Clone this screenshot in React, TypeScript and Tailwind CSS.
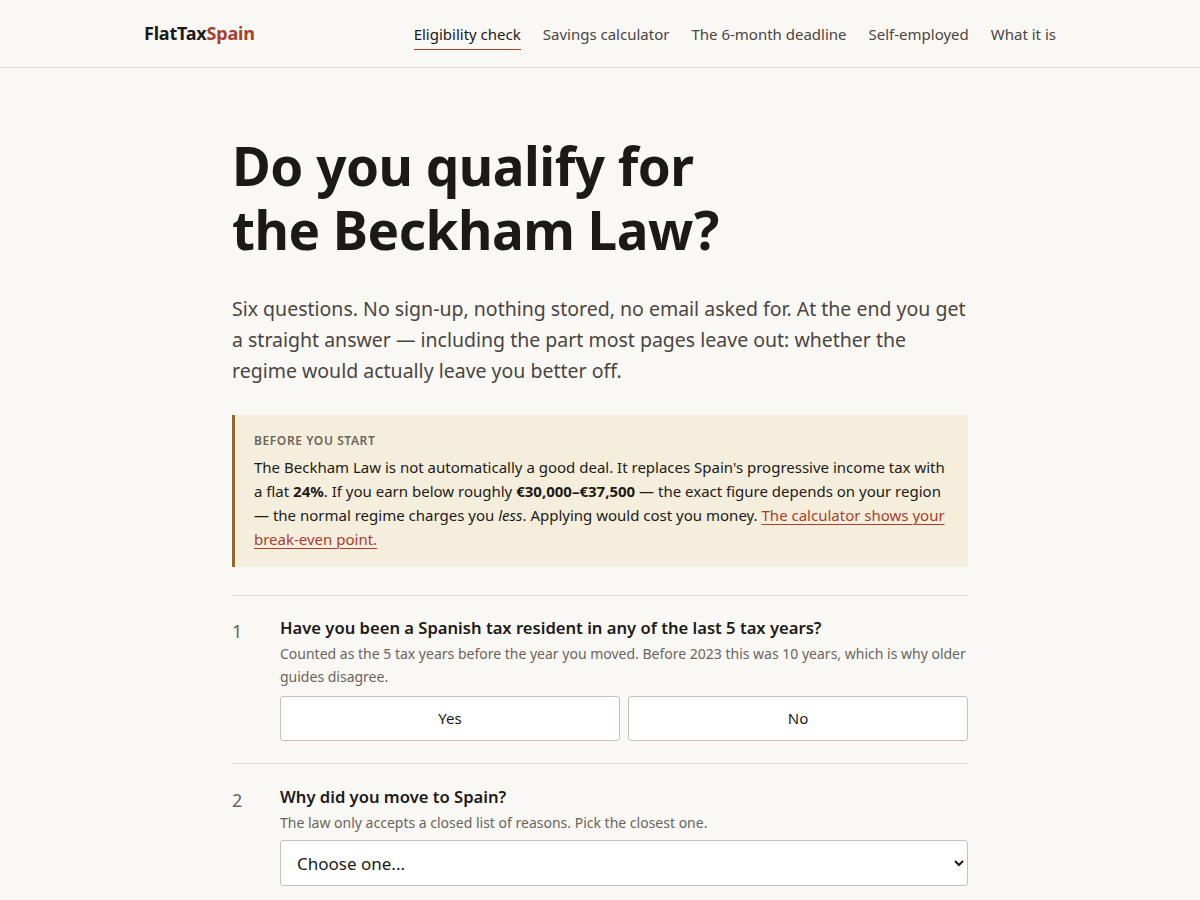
const nav = [
  { label: 'Eligibility check', active: true },
  { label: 'Savings calculator' },
  { label: 'The 6-month deadline' },
  { label: 'Self-employed' },
  { label: 'What it is' },
];

export default function App() {
  return (
    <div className="min-h-screen bg-[#faf8f5] text-[#1c1a17] font-['Noto_Sans',sans-serif]">
      {/* Header */}
      <header className="border-b border-[#e4ddd2]">
        <div className="max-w-[912px] mx-auto h-[67px] flex items-center justify-between">
          <a className="text-[18px] font-bold tracking-[-0.2px]">
            FlatTax<span className="text-[#a6402c]">Spain</span>
          </a>
          <nav className="flex items-center gap-[22px] text-[15px] text-[#4a453f] pt-[6px]">
            {nav.map((item) => (
              <a
                key={item.label}
                className={
                  item.active
                    ? 'text-[#1c1a17] pb-[4px] border-b border-[#a6402c]'
                    : 'pb-[4px] border-b border-transparent'
                }
              >
                {item.label}
              </a>
            ))}
          </nav>
        </div>
      </header>

      <main className="max-w-[736px] mx-auto pt-[66px] pb-16">
        <h1 className="text-[53px] leading-[64px] font-bold tracking-[-0.5px] text-[#1c1a17]">
          Do you qualify for
          <br />
          the Beckham Law?
        </h1>
        <p className="mt-[31px] text-[19.5px] leading-[31px] text-[#4a453f]">
          Six questions. No sign-up, nothing stored, no email asked for. At the end you get a straight
          answer — including the part most pages leave out: whether the regime would actually leave
          you better off.
        </p>

        {/* Callout */}
        <div className="mt-[29px] bg-[#f6eedc] border-l-[3px] border-[#8b6a2b] px-[19px] pt-[17px] pb-[16px]">
          <p className="text-[12px] font-semibold tracking-[0.6px] uppercase text-[#6b645a] leading-[18px]">
            Before you start
          </p>
          <p className="mt-[5px] text-[15px] leading-[24px] text-[#1c1a17] font-stretch-semi-condensed">
            The Beckham Law is not automatically a good deal. It replaces Spain's progressive income
            tax with a flat <strong className="font-bold">24%</strong>. If you earn below roughly{' '}
            <strong className="font-bold">€30,000–€37,500</strong> — the exact figure depends on your
            region — the normal regime charges you <em>less</em>. Applying would cost you money.{' '}
            <a className="text-[#a6402c] underline underline-offset-[3px] decoration-1">
              The calculator shows your break-even point.
            </a>
          </p>
        </div>

        {/* Questions */}
        <div className="mt-[28px] border-t border-[#e4ddd2]">
          <section className="flex pt-[19px] pb-[22px] border-b border-[#e4ddd2]">
            <div className="w-[48px] shrink-0 text-[18px] text-[#6b645a] pt-[3px]">1</div>
            <div className="flex-1">
              <h2 className="text-[16.6px] leading-[26px] font-semibold font-stretch-semi-condensed">
                Have you been a Spanish tax resident in any of the last 5 tax years?
              </h2>
              <p className="mt-[1px] text-[14px] leading-[23px] text-[#6b645a] font-stretch-semi-condensed">
                Counted as the 5 tax years before the year you moved. Before 2023 this was 10 years,
                which is why older guides disagree.
              </p>
              <div className="mt-[8px] grid grid-cols-2 gap-[8px]">
                <button className="h-[45px] bg-white border border-[#c8c1b6] rounded-[3px] text-[15px] text-[#1c1a17]">
                  Yes
                </button>
                <button className="h-[45px] bg-white border border-[#c8c1b6] rounded-[3px] text-[15px] text-[#1c1a17]">
                  No
                </button>
              </div>
            </div>
          </section>

          <section className="flex pt-[20px] pb-[22px]">
            <div className="w-[48px] shrink-0 text-[18px] text-[#6b645a] pt-[3px]">2</div>
            <div className="flex-1">
              <h2 className="text-[16.6px] leading-[26px] font-semibold font-stretch-semi-condensed">
                Why did you move to Spain?
              </h2>
              <p className="mt-[1px] text-[14px] leading-[23px] text-[#6b645a] font-stretch-semi-condensed">
                The law only accepts a closed list of reasons. Pick the closest one.
              </p>
              <select className="mt-[6px] w-full h-[46px] bg-white border border-[#c8c1b6] rounded-[3px] px-[12px] text-[17px] text-[#1c1a17]">
                <option>Choose one...</option>
                <option>Employment contract with a Spanish company</option>
                <option>Company director</option>
                <option>Remote work (digital nomad visa)</option>
                <option>Starting an innovative business</option>
                <option>Highly qualified professional</option>
              </select>
            </div>
          </section>
        </div>
      </main>
    </div>
  );
}
